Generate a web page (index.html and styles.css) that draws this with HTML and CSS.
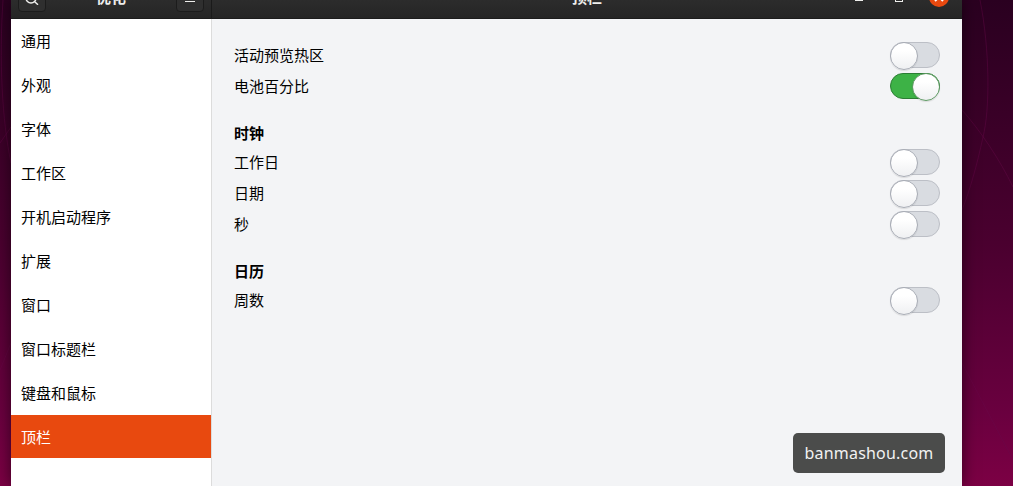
FILE: index.html
```html
<!DOCTYPE html>
<html lang="zh-CN">
<head>
    <meta charset="UTF-8">
    <title>优化</title>
    <link rel="stylesheet" href="styles.css">
</head>
<body>
    <svg class="wallpaper-lines" width="1013" height="486" viewBox="0 0 1013 486" fill="none">
        <path d="M980 0 C990 50 990 110 983 137 C977 165 970 190 962 210"/>
        <path d="M962 110 C980 130 1000 160 1013 187"/>
        <path d="M962 363 L1013 460"/>
        <path d="M11 127 L0 143"/>
        <path d="M3 0 C-1 60 2 120 11 163"/>
        <path d="M11 343 L0 370"/>
    </svg>

    <div class="window">
        <header class="titlebar">
            <div class="titlebar-left">
                <button class="head-btn search-btn">
                    <svg width="16" height="16" viewBox="0 0 16 16" fill="none" stroke="#eeeeec" stroke-width="1.5">
                        <circle cx="7" cy="9" r="5"/>
                        <path d="M10.7 12.7 L14 15.7"/>
                    </svg>
                </button>
                <span class="head-title">优化</span>
                <button class="head-btn menu-btn">
                    <span class="menu-line"></span>
                </button>
            </div>
            <div class="titlebar-right">
                <span class="head-title main-title">顶栏</span>
                <div class="win-controls">
                    <span class="win-min"></span>
                    <span class="win-max"></span>
                    <span class="win-close">
                        <svg width="20" height="20" viewBox="0 0 20 20" stroke="#fff" stroke-width="2">
                            <path d="M6 6 L14 14 M14 6 L6 14"/>
                        </svg>
                    </span>
                </div>
            </div>
        </header>

        <div class="body-wrap">
            <ul class="sidebar">
                <li>通用</li>
                <li>外观</li>
                <li>字体</li>
                <li>工作区</li>
                <li>开机启动程序</li>
                <li>扩展</li>
                <li>窗口</li>
                <li>窗口标题栏</li>
                <li>键盘和鼠标</li>
                <li class="active">顶栏</li>
            </ul>

            <main class="content">
                <section class="group">
                    <div class="row"><span class="label">活动预览热区</span><span class="switch"></span></div>
                    <div class="row"><span class="label">电池百分比</span><span class="switch on"></span></div>
                </section>
                <section class="group">
                    <h2>时钟</h2>
                    <div class="row"><span class="label">工作日</span><span class="switch"></span></div>
                    <div class="row"><span class="label">日期</span><span class="switch"></span></div>
                    <div class="row"><span class="label">秒</span><span class="switch"></span></div>
                </section>
                <section class="group">
                    <h2>日历</h2>
                    <div class="row"><span class="label">周数</span><span class="switch"></span></div>
                </section>
            </main>
        </div>
    </div>

    <div class="watermark">banmashou.com</div>
</body>
</html>
```

FILE: styles.css
```css
* {
    box-sizing: border-box;
}
html, body {
    height: 100%;
}
body {
    margin: 0;
    overflow: hidden;
    padding-left: 11px;
    font-family: "Noto Sans CJK SC", "Noto Sans", sans-serif;
    font-size: 15px;
    color: #000;
    background: linear-gradient(180deg, #2a0020 0%, #4a002f 50%, #6a003f 85%, #7c0044 100%);
}
.wallpaper-lines {
    position: absolute;
    left: 0;
    top: 0;
}
.wallpaper-lines path {
    stroke: #6a0a4c;
    stroke-opacity: 0.4;
    stroke-width: 1;
}
.window {
    position: relative;
    width: 951px;
    height: 486px;
    display: flex;
    flex-direction: column;
    box-shadow: 0 0 14px rgba(0, 0, 0, 0.55);
}

/* header is cut off by the top of the screen */
.titlebar {
    height: 19px;
    flex: none;
    display: flex;
    overflow: hidden;
    background: linear-gradient(180deg, #2c2c2c, #252525);
    border-bottom: 1px solid #1c1c1c;
}
.titlebar-left {
    width: 201px;
    flex: none;
    display: flex;
    align-items: flex-end;
    justify-content: space-between;
    padding: 0 7px 6px 7px;
    border-right: 1px solid #1a1a1a;
}
.titlebar-right {
    flex: 1;
    position: relative;
    display: flex;
    align-items: flex-end;
    justify-content: center;
    padding-bottom: 6px;
}
.head-btn {
    width: 28px;
    height: 30px;
    flex: none;
    display: flex;
    align-items: flex-end;
    justify-content: center;
    padding: 0;
    background: #2f2f2f;
    border: 1px solid #1c1c1c;
    border-radius: 4px;
}
.search-btn {
    padding-bottom: 6px;
}
.menu-btn {
    padding-bottom: 9px;
}
.menu-line {
    display: block;
    width: 10px;
    height: 1px;
    background: #eeeeec;
}
.head-title {
    font-weight: bold;
    color: #eeeeec;
    line-height: 20px;
    margin-bottom: 5px;
}
.win-controls {
    position: absolute;
    right: 13px;
    bottom: 11px;
    display: flex;
    align-items: flex-end;
}
.win-min {
    width: 8px;
    height: 2px;
    margin: 0 32px 6px 0;
    background: #eeeeec;
}
.win-max {
    width: 8px;
    height: 8px;
    margin: 0 26px 5px 0;
    border: 1px solid #eeeeec;
}
.win-close {
    width: 20px;
    height: 20px;
    border-radius: 50%;
    background: #e9490f;
}
.win-close svg {
    display: block;
}

.body-wrap {
    flex: 1;
    display: flex;
    min-height: 0;
}
.sidebar {
    width: 201px;
    flex: none;
    margin: 0;
    padding: 0;
    list-style: none;
    background: #fff;
    border-right: 1px solid #dcdcdc;
}
.sidebar li {
    height: 44px;
    line-height: 43px;
    padding-left: 10px;
}
.sidebar li.active {
    height: 43px;
    line-height: 44px;
    background: #e8490f;
    color: #fff;
}
.content {
    flex: 1;
    padding: 23px 22px 0 22px;
    background: #f3f4f6;
}
.group {
    display: flex;
    flex-direction: column;
    gap: 5px;
    margin-bottom: 25px;
}
.group h2 {
    margin: 0;
    padding-bottom: 2px;
    font-size: 15px;
    line-height: 18px;
    font-weight: bold;
}
.row {
    height: 26px;
    display: flex;
    align-items: center;
    justify-content: space-between;
}
.label {
    padding-bottom: 2px;
}
.switch {
    position: relative;
    width: 50px;
    height: 26px;
    background: #d9dce1;
    border: 1px solid #bcbfc6;
    border-radius: 13px;
}
.switch::after {
    content: "";
    position: absolute;
    left: -1px;
    top: -1px;
    width: 26px;
    height: 26px;
    border-radius: 50%;
    background: linear-gradient(180deg, #ffffff 30%, #eff0f2);
    border: 1px solid #a9adb6;
    box-shadow: 0 1px 1px rgba(0, 0, 0, 0.1);
}
.switch.on {
    background: #3db246;
    border-color: #2b7d33;
}
.switch.on::after {
    left: auto;
    right: -1px;
    border-color: #5f9a64;
}

.watermark {
    position: absolute;
    left: 793px;
    top: 433px;
    width: 152px;
    height: 40px;
    line-height: 40px;
    text-align: center;
    font-family: "Noto Sans", sans-serif;
    font-size: 16px;
    letter-spacing: 0.2px;
    color: #f2f2f2;
    background: #4b4c4b;
    border-radius: 5px;
}
```
